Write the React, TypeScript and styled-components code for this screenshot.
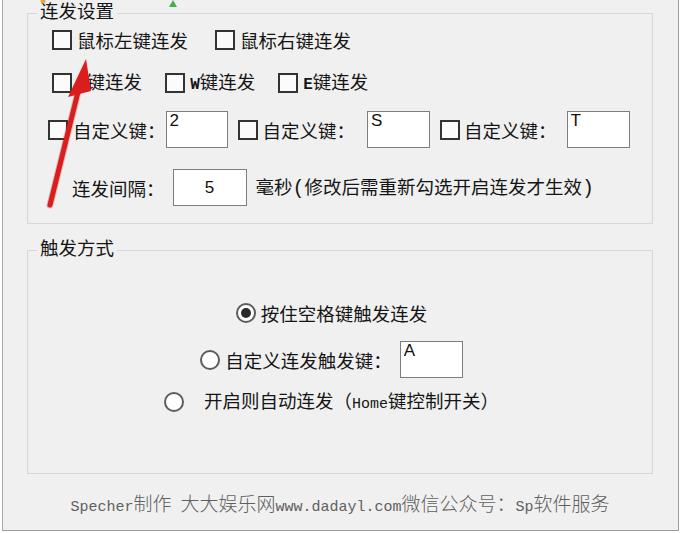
import React from 'react';
import styled, { createGlobalStyle } from 'styled-components';

const GlobalStyle = createGlobalStyle`
  html, body {
    margin: 0;
    padding: 0;
    background: #ffffff;
  }
  body {
    font-family: "Noto Sans CJK SC", "Noto Sans", sans-serif;
  }
`;

const Page = styled.div`
  position: relative;
  width: 695px;
  height: 533px;
  overflow: hidden;
`;

const Window = styled.div`
  box-sizing: border-box;
  width: 677px;
  height: 531px;
  margin-left: 2px;
  padding: 0 25px 0 24px;
  display: flex;
  flex-direction: column;
  background: #f0f0f0;
  border-left: 1px solid #a8a8a8;
  border-right: 1px solid #9c9c9c;
  border-bottom: 1px solid #9c9c9c;
  color: #151515;
  font-size: 18.5px;
`;

const GroupBox = styled.fieldset<{ $top: number; $padTop: number; $padBottom: number; $center?: boolean }>`
  margin: ${({ $top }) => $top}px 0 0;
  padding: ${({ $padTop }) => $padTop}px ${({ $center }) => ($center ? 17 : 0)}px
    ${({ $padBottom }) => $padBottom}px 0;
  min-inline-size: 0;
  border: 1px solid #d7d7d7;
  display: flex;
  flex-direction: column;
  align-items: ${({ $center }) => ($center ? 'center' : 'flex-start')};
`;

const Legend = styled.legend`
  margin-left: 9px;
  padding: 0 3px 6px;
  line-height: 20px;
  font-size: 18.5px;
  color: #151515;
`;

const Row = styled.div<{ $indent?: number; $top?: number; $height: number }>`
  display: flex;
  align-items: center;
  height: ${({ $height }) => $height}px;
  padding-left: ${({ $indent }) => $indent ?? 0}px;
  margin-top: ${({ $top }) => $top ?? 0}px;
  white-space: nowrap;
`;

const Option = styled.label<{ $ml?: number; $gap?: number }>`
  display: flex;
  align-items: center;
  gap: ${({ $gap }) => $gap ?? 5}px;
  margin-left: ${({ $ml }) => $ml ?? 0}px;
  line-height: 22px;
`;

const Check = styled.input.attrs({ type: 'checkbox' })`
  appearance: none;
  box-sizing: border-box;
  width: 20px;
  height: 20px;
  margin: 0;
  flex: none;
  background: #fbfbfb;
  border: 2px solid #333333;
`;

const Radio = styled.input.attrs({ type: 'radio' })`
  appearance: none;
  box-sizing: border-box;
  width: 20px;
  height: 20px;
  margin: 0;
  flex: none;
  border-radius: 50%;
  background: #ffffff;
  border: 2px solid #5c5c5c;
  display: grid;
  place-content: center;

  &:checked::before {
    content: '';
    width: 10px;
    height: 10px;
    border-radius: 50%;
    background: #2a2a2a;
  }
`;

const Latin = styled.span<{ $size?: number; $bold?: boolean }>`
  font-family: "Liberation Mono", monospace;
  font-size: ${({ $size }) => $size ?? 15}px;
  font-weight: ${({ $bold }) => ($bold ? 700 : 400)};
`;

const Label = styled.span<{ $ml?: number }>`
  margin-left: ${({ $ml }) => $ml ?? 0}px;
  line-height: 22px;
`;

const KeyInput = styled.input<{ $w: number; $ml?: number; $center?: boolean }>`
  box-sizing: border-box;
  flex: none;
  width: ${({ $w }) => $w}px;
  height: 37px;
  margin: 0 0 0 ${({ $ml }) => $ml ?? 0}px;
  padding: ${({ $center }) => ($center ? '0' : '0 3px 18px')};
  background: #ffffff;
  border: 1px solid #7d7d7d;
  border-radius: 0;
  font-family: "Liberation Sans", Arial, sans-serif;
  font-size: 17px;
  color: #111;
  text-align: ${({ $center }) => ($center ? 'center' : 'left')};
  outline: none;
`;

const Footer = styled.div`
  flex: 1;
  display: flex;
  align-items: center;
  justify-content: center;
`;

const FooterText = styled.span`
  color: #606060;
  font-size: 19px;
  font-weight: 300;
  white-space: pre;
`;

const Overlay = styled.svg`
  position: absolute;
  left: 0;
  top: 0;
  pointer-events: none;
`;

const App: React.FC = () => {
  return (
    <Page>
      <GlobalStyle />
      <Window>
        <GroupBox $top={0} $padTop={4} $padBottom={17}>
          <Legend>连发设置</Legend>
          <Row $indent={24} $height={20}>
            <Option>
              <Check />
              鼠标左键连发
            </Option>
            <Option $ml={27}>
              <Check />
              鼠标右键连发
            </Option>
          </Row>
          <Row $indent={24} $top={23} $height={20}>
            <Option>
              <Check />
              <span><Latin $size={16} $bold>Q</Latin>键连发</span>
            </Option>
            <Option $ml={23}>
              <Check />
              <span><Latin $size={16} $bold>W</Latin>键连发</span>
            </Option>
            <Option $ml={23}>
              <Check />
              <span><Latin $size={16} $bold>E</Latin>键连发</span>
            </Option>
          </Row>
          <Row $indent={20} $top={18} $height={37}>
            <Option>
              <Check />
              自定义键：
            </Option>
            <KeyInput $w={62} defaultValue="2" />
            <Option $ml={10}>
              <Check />
              自定义键：
            </Option>
            <KeyInput $w={63} $ml={12} defaultValue="S" />
            <Option $ml={10} $gap={4}>
              <Check />
              自定义键：
            </Option>
            <KeyInput $w={63} $ml={10} defaultValue="T" />
          </Row>
          <Row $indent={44} $top={21} $height={37}>
            <Label>连发间隔：</Label>
            <KeyInput $w={74} $ml={8} $center defaultValue="5" />
            <Label $ml={9}>
              毫秒<Latin $size={20}>(</Latin>修改后需重新勾选开启连发才生效<Latin $size={20}>)</Latin>
            </Label>
          </Row>
        </GroupBox>

        <GroupBox $top={13} $padTop={40} $padBottom={61} $center>
          <Legend>触发方式</Legend>
          <Row $height={20}>
            <Option>
              <Radio name="trigger" defaultChecked />
              按住空格键触发连发
            </Option>
          </Row>
          <Row $top={18} $height={37}>
            <Option>
              <Radio name="trigger" />
              自定义连发触发键：
            </Option>
            <KeyInput $w={63} $ml={8} defaultValue="A" />
          </Row>
          <Row $top={14} $height={20}>
            <Option $gap={20}>
              <Radio name="trigger" />
              <span>开启则自动连发（<Latin $size={15}>Home</Latin>键控制开关）</span>
            </Option>
          </Row>
        </GroupBox>

        <Footer>
          <FooterText>
            <Latin>Specher</Latin>制作<Latin> </Latin>大大娱乐网<Latin>www.dadayl.com</Latin>微信公众号：<Latin>Sp</Latin>软件服务
          </FooterText>
        </Footer>
      </Window>

      <Overlay width={695} height={533} viewBox="0 0 695 533">
        <circle cx={43} cy={1} r={2.5} fill="#e4a24a" />
        <polygon points="169,7 177,7 173,0" fill="#43b049" />
        <line x1={50} y1={205} x2={78} y2={92} stroke="#9a1414" strokeOpacity={0.25} strokeWidth={7} strokeLinecap="round" />
        <line x1={50} y1={205} x2={78} y2={92} stroke="#dc1d1d" strokeWidth={5} strokeLinecap="round" />
        <polygon points="86,59 68,97 91,91" fill="#dc1d1d" />
      </Overlay>
    </Page>
  );
};

export default App;
